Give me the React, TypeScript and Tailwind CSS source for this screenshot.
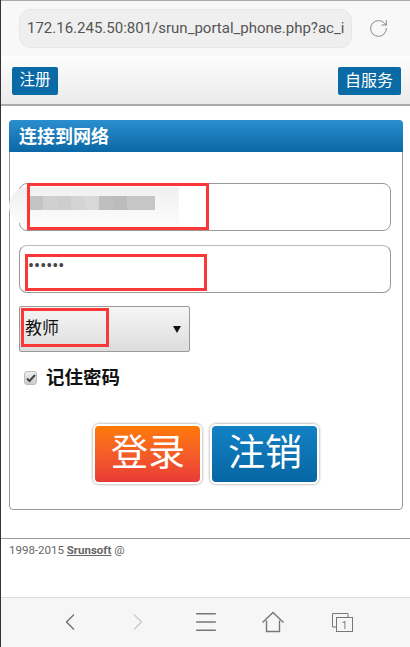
import { RotateCw, ChevronLeft, ChevronRight, Menu } from 'lucide-react';

const cjk = "font-['Roboto','Noto_Sans_CJK_SC',sans-serif]";

export default function App() {
  return (
    <div className={`relative flex h-[647px] w-[410px] flex-col overflow-hidden border-l border-[#333] bg-white ${cjk}`}>
      {/* browser address bar */}
      <div className="flex h-[56px] items-center border-t border-[#aaa] bg-[#f8f8f8] pl-[18px] pb-[1px]">
        <div className="flex h-[39px] w-[333px] items-center overflow-hidden rounded-[12px] border border-[#e6e6e6] bg-[#efefef] pl-[7px] text-[15px] whitespace-nowrap text-[#555]">
          <span>172.16.245.50:801/srun_portal_phone.php?ac_i</span>
        </div>
        <RotateCw className="ml-[16px] text-[#777]" size={21} strokeWidth={1} />
      </div>

      {/* page header */}
      <div className="flex h-[50px] items-center justify-between border-b-2 border-[#aaa] bg-gradient-to-b from-[#fdfdfd] to-[#ebebeb] pr-[9px] pl-[11px] pt-[2px]">
        <a className="flex h-[28px] w-[46px] items-center justify-center rounded-[2px] bg-[#0a6aa5] text-[15.5px] text-white">注册</a>
        <a className="flex h-[28px] w-[63px] items-center justify-center rounded-[2px] bg-[#0a6aa5] pr-[1px] text-[16px] text-white">自服务</a>
      </div>

      {/* login panel */}
      <div className="mt-[14px] ml-[8px] flex h-[390px] w-[394px] flex-col rounded-[4px] border border-[#999]">
        <div className="-mx-px -mt-px flex h-[32px] items-center rounded-t-[4px] bg-gradient-to-b from-[#2a8fcf] to-[#0a67a5] pl-[10px] text-[18px] font-bold text-white">
          连接到网络
        </div>
        <div className="flex flex-1 flex-col px-[9px] pt-[31px]">
          <div className="relative h-[48px] w-[372px] rounded-[8px] border border-[#999] bg-white">
            <div className="absolute top-[3px] left-[-11px] h-[38px] w-[170px] rounded-l-full rounded-r-[60px] bg-gradient-to-b from-[#f0f0f0] to-[#fcfcfc]" />
            <div className="absolute top-[12px] left-[9px] flex h-[14px] w-[126px]">
              <div className="h-full w-[14px] bg-[#c4c4c4]" />
              <div className="h-full w-[14px] bg-[#d0d0d0]" />
              <div className="h-full w-[14px] bg-[#cdcdcd]" />
              <div className="h-full w-[14px] bg-[#d4d4d4]" />
              <div className="h-full w-[14px] bg-[#d8d8d8]" />
              <div className="h-full w-[14px] bg-[#bfbfbf]" />
              <div className="h-full w-[14px] bg-[#bcbcbc]" />
              <div className="h-full w-[14px] bg-[#c6c6c6]" />
              <div className="h-full w-[14px] bg-[#c6c6c6]" />
            </div>
            <div className="absolute top-[-1px] left-[7px] h-[47px] w-[182px] border-[3px] border-[#fa3838]" />
          </div>
          <div className="relative mt-[14px] h-[48px] w-[372px] rounded-[8px] border border-[#999] border-t-[#bbb] bg-white">
            <span className="absolute top-[12px] left-[8px] text-[18px] leading-[16px] tracking-[0px] text-[#444]">••••••</span>
            <div className="absolute top-[8px] left-[5px] h-[37px] w-[182px] border-[3px] border-[#fa3838]" />
          </div>
          <div className="relative mt-[13px] flex h-[46px] w-[171px] items-center justify-between rounded-[2px] border border-[#999] bg-gradient-to-b from-[#f6f6f6] to-[#dddddd] pr-[8px] pl-[5px] text-[17px] text-[#111]">
            <span>教师</span>
            <svg width="8" height="8" viewBox="0 0 8 8" className="fill-[#111]">
              <path d="M0 1h8L4 8z" />
            </svg>
            <div className="absolute top-[1px] left-[1px] h-[39px] w-[88px] border-[3px] border-[#fa3838]" />
          </div>
          <label className="mt-[13px] flex items-center pl-[5px] text-[18.5px] leading-[26px] font-bold text-[#111]">
            <span className="flex h-[14px] w-[13px] items-center justify-center rounded-[3px] border border-[#bbb] bg-gradient-to-b from-[#eee] to-[#ccc]">
              <svg width="10" height="10" viewBox="0 0 10 10" fill="none" className="stroke-[#444] stroke-2">
                <path d="M1 5.5l2.5 2.5L9 2" />
              </svg>
            </span>
            <span className="ml-[9px]">记住密码</span>
          </label>
          <div className="mt-[33px] flex justify-center gap-[8px]">
            <button className="flex h-[60px] w-[109px] items-center justify-center rounded-[6px] border-[2px] border-white bg-gradient-to-b from-[#ff7a00] to-[#e83a35] pb-[1px] pl-[1px] text-[37px] text-white shadow-[0_0_3px_#888]">登录</button>
            <button className="flex h-[60px] w-[109px] items-center justify-center rounded-[6px] border-[2px] border-white bg-gradient-to-b from-[#1282c4] to-[#0766a3] pb-[1px] pl-[1px] text-[37px] text-white shadow-[0_0_3px_#888]">注销</button>
          </div>
        </div>
      </div>

      {/* footer */}
      <div className="mt-[28px] h-[59px] border-t border-[#999] pt-[3px] pl-[8px] text-[11.5px] leading-[16px] text-[#666]">
        1998-2015 <a className="font-bold underline">Srunsoft</a> @
      </div>

      {/* browser toolbar */}
      <div className="flex h-[50px] items-center border-t border-[#ddd] bg-[#f6f6f6] pb-[1px] text-[#777]">
        <ChevronLeft className="ml-[55px]" size={28} strokeWidth={1.3} />
        <ChevronRight className="ml-[40px] text-[#ccc]" size={28} strokeWidth={1.3} />
        <Menu className="ml-[40px]" size={28} strokeWidth={1.3} />
        <svg width="24" height="24" viewBox="0 0 24 24" fill="none" className="ml-[41px] stroke-[#777] stroke-[1.4]">
          <path d="M1.5 12.5L12 2.5l10.5 10M5.5 10.5V21.5h13V10.5" />
        </svg>
        <svg width="24" height="24" viewBox="0 0 24 24" fill="none" className="ml-[45px] stroke-[#777]">
          <path d="M6 17H2.5V3.5H18V7" />
          <rect x="6.5" y="7.5" width="16" height="14" />
          <text x="14.5" y="19" fontSize="10" textAnchor="middle" className="fill-[#777] stroke-0">1</text>
        </svg>
      </div>
    </div>
  );
}
